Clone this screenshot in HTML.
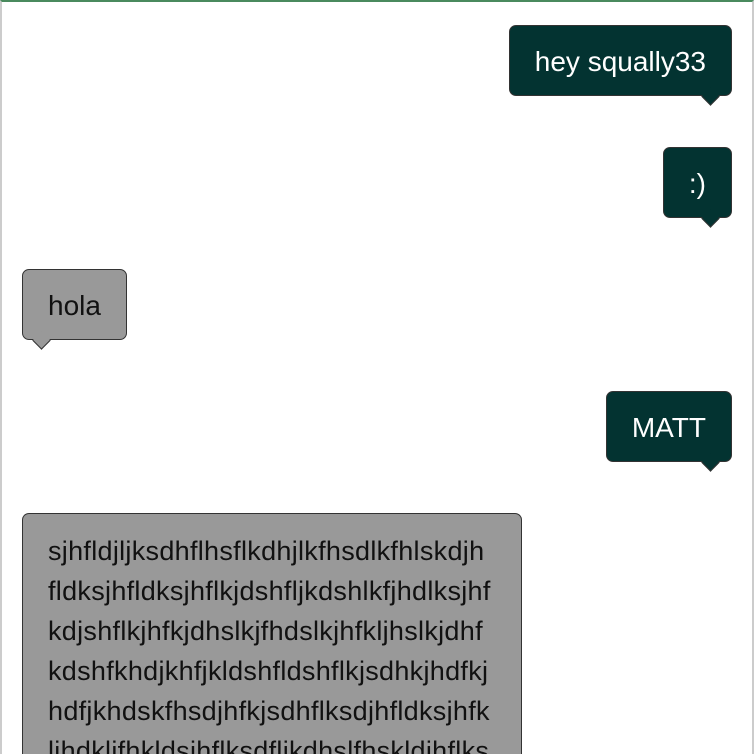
<!DOCTYPE html>
<html><head><meta charset="utf-8"><style>
html,body{margin:0;padding:0;width:754px;height:754px;overflow:hidden;background:#fff;font-family:"Liberation Sans",Arial,sans-serif;position:relative;}
.frame{position:absolute;left:0;top:0;width:754px;height:754px;border-left:2px solid #ccc;border-right:2px solid #ccc;border-top:2px solid #4a8a5e;box-sizing:border-box;}
.b{position:absolute;box-sizing:border-box;border:1.5px solid #333;border-radius:7px;font-size:28px;height:71px;line-height:72px;padding:0 25px;white-space:nowrap;}
.r{background:#033331;color:#fff;right:22px;}
.l{background:#999;color:#111;left:22px;}
.t{position:absolute;width:12px;height:12px;transform:rotate(45deg);border-right:1.5px solid #333;border-bottom:1.5px solid #333;bottom:-8px;}
.r .t{background:#033331;right:14px;}
.l .t{background:#999;left:12px;}
.big{position:absolute;left:22px;top:513px;width:500px;height:241px;box-sizing:border-box;border:1.5px solid #333;border-bottom:none;border-radius:7px 7px 0 0;background:#999;color:#111;font-size:27px;letter-spacing:0.3px;line-height:40px;padding:17px 0 0 25px;white-space:nowrap;overflow:hidden;}
</style></head><body>
<div class="frame"></div>
<div class="b r" style="top:25px">hey squally33<div class="t"></div></div>
<div class="b r" style="top:147px">:)<div class="t"></div></div>
<div class="b l" style="top:269px">hola<div class="t"></div></div>
<div class="b r" style="top:391px">MATT<div class="t"></div></div>
<div class="big">sjhfldjljksdhflhsflkdhjlkfhsdlkfhlskdjh<br>fldksjhfldksjhflkjdshfljkdshlkfjhdlksjhf<br>kdjshflkjhfkjdhslkjfhdslkjhfkljhslkjdhf<br>kdshfkhdjkhfjkldshfldshflkjsdhkjhdfkj<br>hdfjkhdskfhsdjhfkjsdhflksdjhfldksjhfk<br>ljhdkljfhkldsjhflksdfljkdhslfhskldjhflks</div>
</body></html>
